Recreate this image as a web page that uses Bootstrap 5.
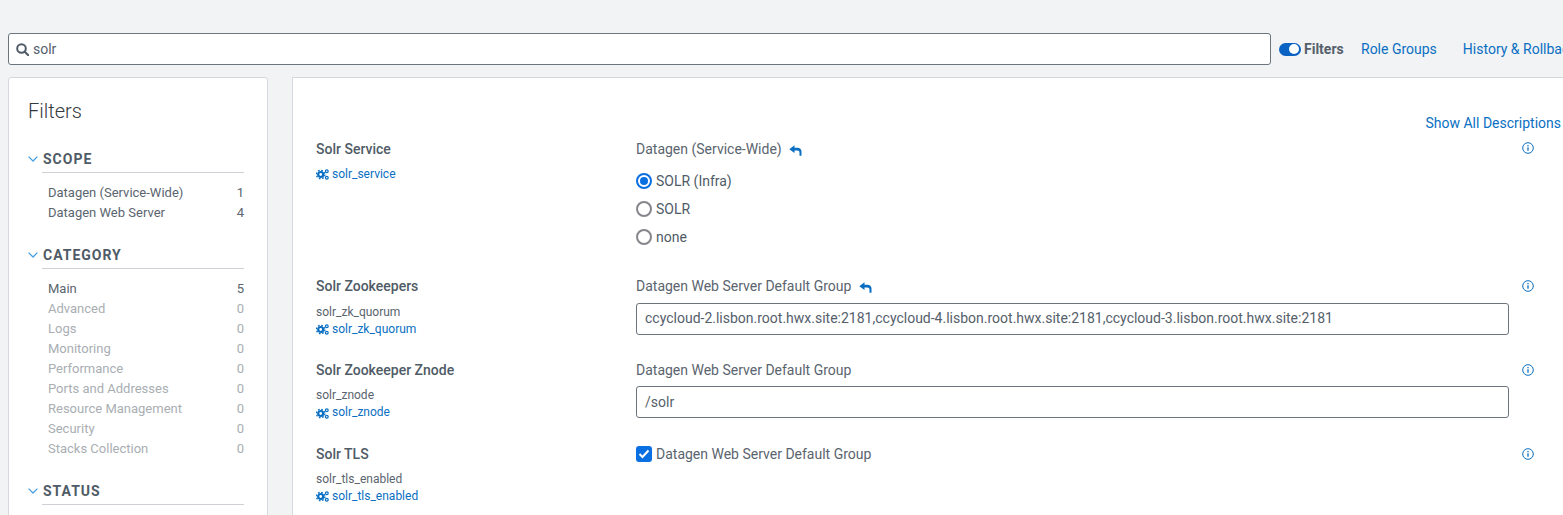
<!DOCTYPE html>
<html lang="en">
<head>
    <meta charset="UTF-8">
    <title>Solr Configuration</title>
    <link href="https://cdn.jsdelivr.net/npm/bootstrap@5.3.0/dist/css/bootstrap.min.css" rel="stylesheet">
    <style>
        html, body {
            height: 515px;
            overflow: hidden;
        }
        body {
            background-color: #f1f3f5;
            font-family: Roboto, "Liberation Sans", sans-serif;
            font-size: 13px;
            color: #5a656f;
        }
        a {
            text-decoration: none;
            color: #0a6fc2;
        }
        .top-bar {
            padding: 33px 0 12px 8px;
            height: 77px;
            width: 1600px;
        }
        .search-box {
            width: 1263px;
            height: 32px;
            background: #fff;
            border: 1px solid #6c757d;
            border-radius: 3px;
            padding-left: 7px;
            font-size: 14px;
            color: #55606b;
            gap: 4px;
        }
        .filter-toggle {
            margin-left: 8px;
            font-weight: 700;
            font-size: 14px;
            color: #55606b;
            width: 82px;
        }
        .toggle-pill {
            width: 22px;
            height: 13px;
            border-radius: 7px;
            background: #0a62c2;
            margin-right: 3px;
            padding: 1.5px 2px;
        }
        .toggle-pill span {
            width: 10px;
            height: 10px;
            border-radius: 50%;
            background: #fff;
        }
        .top-link {
            font-size: 14px;
            white-space: nowrap;
        }
        .top-link-next {
            margin-left: 26px;
        }
        .main-area {
            padding-left: 8px;
            height: 438px;
        }
        .filter-panel {
            width: 260px;
            flex: none;
            height: 460px;
            background: #fff;
            border: 1px solid #d5d8dc;
            border-radius: 3px;
            padding: 19px 23px 0 19px;
        }
        .filter-panel h2 {
            font-size: 20px;
            font-weight: 300;
            color: #343a40;
            line-height: 28px;
            margin-bottom: 25px;
        }
        .group-head {
            font-size: 14px;
            font-weight: 700;
            letter-spacing: 1px;
            color: #4f5b66;
            line-height: 18px;
        }
        .group-head svg {
            margin-right: 5px;
        }
        .group-rule {
            border-bottom: 1px solid #cdd0d4;
            margin-left: 14px;
            padding-bottom: 4px;
        }
        .group-items {
            padding: 10px 0 0 20px;
            margin-bottom: 23px;
        }
        .filter-item {
            height: 20px;
            line-height: 20px;
        }
        .filter-item.off {
            color: #a9aeb3;
        }
        .config-panel {
            margin-left: 24px;
            width: 1300px;
            flex: none;
            height: 460px;
            background: #fff;
            border: 1px solid #d5d8dc;
            padding: 0 0 0 23px;
        }
        .desc-row {
            width: 1245px;
            padding-top: 37px;
            height: 62px;
            font-size: 14px;
            line-height: 17px;
            text-align: right;
        }
        .cfg-row {
            width: 1218px;
            min-height: 83.8px;
        }
        .cfg-row-tall {
            min-height: 137px;
        }
        .cfg-left {
            width: 320px;
            flex: none;
        }
        .cfg-mid {
            width: 873px;
            flex: none;
        }
        .cfg-info svg {
            display: block;
            margin-top: 3px;
        }
        .cfg-row-tall .cfg-info svg {
            margin-top: 2px;
        }
        .cfg-title {
            font-size: 14px;
            font-weight: 500;
            line-height: 18px;
            color: #4f5b66;
        }
        .cfg-scope {
            font-size: 14px;
            line-height: 18px;
            color: #5a646e;
        }
        .cfg-key {
            font-size: 12px;
            line-height: 17px;
            margin-top: 8.5px;
            color: #5a646e;
        }
        .cfg-link {
            font-size: 12px;
            line-height: 17px;
        }
        .value-box {
            height: 32px;
            border: 1px solid #6c757d;
            border-radius: 3px;
            padding-left: 8px;
            margin-top: 7.6px;
            font-size: 14px;
            color: #55606b;
        }
        .radio-list {
            margin-top: 9px;
        }
        .radio-line {
            height: 28px;
            font-size: 14px;
            color: #4f5b66;
        }
        .radio-dot {
            width: 16px;
            height: 16px;
            border-radius: 50%;
            border: 2px solid #85868c;
            margin-right: 4px;
            flex: none;
        }
        .radio-dot.on {
            border-color: #0a6fe0;
            padding: 2px;
        }
        .radio-dot.on span {
            display: block;
            width: 8px;
            height: 8px;
            border-radius: 50%;
            background: #0a6fe0;
        }
        .check-on {
            width: 16px;
            height: 16px;
            border-radius: 3px;
            background: #0a6fe0;
            margin-right: 4px;
        }
    </style>
</head>
<body>
    <svg class="d-none">
        <symbol id="gears" viewBox="0 0 13 11">
            <circle cx="4.700" cy="5.500" r="2.500" fill="none" stroke="#0a6fc2" stroke-width="2.200"/>
            <circle cx="4.700" cy="5.500" r="4.200" fill="none" stroke="#0a6fc2" stroke-width="1.300" stroke-dasharray="1.700 1.600"/>
            <circle cx="10.800" cy="2.300" r="1.400" fill="none" stroke="#0a6fc2" stroke-width="1.200"/>
            <circle cx="10.800" cy="8.700" r="1.400" fill="none" stroke="#0a6fc2" stroke-width="1.200"/>
        </symbol>
        <symbol id="undo" viewBox="0 0 13 11">
            <path fill="#0a6fc2" d="M5.500.3.300 4.200l5.200 3.900V5.600h2.700c1.500 0 2.300.8 2.300 2.100v3h2V6.500c0-2.500-1.700-3.800-4.200-3.800H5.500z"/>
        </symbol>
        <symbol id="info" viewBox="0 0 12 12">
            <circle cx="6" cy="6" r="5.300" fill="none" stroke="#0a6fc2"/>
            <path d="M6 5.200v3.500M6 3v1.300" fill="none" stroke="#0a6fc2" stroke-width="1.300"/>
        </symbol>
        <symbol id="chevron" viewBox="0 0 10 6">
            <path d="M.6.6 5 5 9.400.6" fill="none" stroke="#4a9fe0" stroke-width="1.300"/>
        </symbol>
    </svg>

    <div class="top-bar d-flex align-items-center">
        <div class="search-box d-flex align-items-center">
            <svg width="13" height="13" viewBox="0 0 13 13" fill="none" stroke="#4f5b66" stroke-width="2"><circle cx="5.500" cy="5.500" r="4.300"/><path d="M8.700 8.700 12.300 12.300" stroke-linecap="round"/></svg>
            <span>solr</span>
        </div>
        <div class="filter-toggle d-flex align-items-center">
            <div class="toggle-pill d-flex justify-content-end"><span class="d-block"></span></div>
            Filters
        </div>
        <a class="top-link" href="#">Role Groups</a>
        <a class="top-link top-link-next" href="#">History &amp; Rollback</a>
    </div>

    <div class="main-area d-flex">
        <div class="filter-panel">
            <h2>Filters</h2>

            <div class="group-head d-flex align-items-center">
                <svg width="10" height="6"><use href="#chevron"/></svg>
                SCOPE
            </div>
            <div class="group-rule"></div>
            <div class="group-items">
                <div class="filter-item d-flex justify-content-between"><span>Datagen (Service-Wide)</span><span>1</span></div>
                <div class="filter-item d-flex justify-content-between"><span>Datagen Web Server</span><span>4</span></div>
            </div>

            <div class="group-head d-flex align-items-center">
                <svg width="10" height="6"><use href="#chevron"/></svg>
                CATEGORY
            </div>
            <div class="group-rule"></div>
            <div class="group-items">
                <div class="filter-item d-flex justify-content-between"><span>Main</span><span>5</span></div>
                <div class="filter-item off d-flex justify-content-between"><span>Advanced</span><span>0</span></div>
                <div class="filter-item off d-flex justify-content-between"><span>Logs</span><span>0</span></div>
                <div class="filter-item off d-flex justify-content-between"><span>Monitoring</span><span>0</span></div>
                <div class="filter-item off d-flex justify-content-between"><span>Performance</span><span>0</span></div>
                <div class="filter-item off d-flex justify-content-between"><span>Ports and Addresses</span><span>0</span></div>
                <div class="filter-item off d-flex justify-content-between"><span>Resource Management</span><span>0</span></div>
                <div class="filter-item off d-flex justify-content-between"><span>Security</span><span>0</span></div>
                <div class="filter-item off d-flex justify-content-between"><span>Stacks Collection</span><span>0</span></div>
            </div>

            <div class="group-head d-flex align-items-center">
                <svg width="10" height="6"><use href="#chevron"/></svg>
                STATUS
            </div>
            <div class="group-rule"></div>
        </div>

        <div class="config-panel">
            <div class="desc-row"><a href="#">Show All Descriptions</a></div>

            <div class="cfg-row cfg-row-tall d-flex">
                <div class="cfg-left">
                    <div class="cfg-title">Solr Service</div>
                    <div class="cfg-link mt-2"><a href="#"><svg width="13" height="11"><use href="#gears"/></svg> solr_service</a></div>
                </div>
                <div class="cfg-mid">
                    <div class="cfg-scope">Datagen (Service-Wide)
                        <svg class="ms-1" width="13" height="11"><use href="#undo"/></svg>
                    </div>
                    <div class="radio-list">
                        <div class="radio-line d-flex align-items-center"><div class="radio-dot on"><span></span></div>SOLR (Infra)</div>
                        <div class="radio-line d-flex align-items-center"><div class="radio-dot"></div>SOLR</div>
                        <div class="radio-line d-flex align-items-center"><div class="radio-dot"></div>none</div>
                    </div>
                </div>
                <div class="cfg-info ms-auto"><svg width="12" height="12"><use href="#info"/></svg></div>
            </div>

            <div class="cfg-row d-flex">
                <div class="cfg-left">
                    <div class="cfg-title">Solr Zookeepers</div>
                    <div class="cfg-key">solr_zk_quorum</div>
                    <div class="cfg-link"><a href="#"><svg width="13" height="11"><use href="#gears"/></svg> solr_zk_quorum</a></div>
                </div>
                <div class="cfg-mid">
                    <div class="cfg-scope">Datagen Web Server Default Group
                        <svg class="ms-1" width="13" height="11"><use href="#undo"/></svg>
                    </div>
                    <div class="value-box d-flex align-items-center">ccycloud-2.lisbon.root.hwx.site:2181,ccycloud-4.lisbon.root.hwx.site:2181,ccycloud-3.lisbon.root.hwx.site:2181</div>
                </div>
                <div class="cfg-info ms-auto"><svg width="12" height="12"><use href="#info"/></svg></div>
            </div>

            <div class="cfg-row d-flex">
                <div class="cfg-left">
                    <div class="cfg-title">Solr Zookeeper Znode</div>
                    <div class="cfg-key">solr_znode</div>
                    <div class="cfg-link"><a href="#"><svg width="13" height="11"><use href="#gears"/></svg> solr_znode</a></div>
                </div>
                <div class="cfg-mid">
                    <div class="cfg-scope">Datagen Web Server Default Group</div>
                    <div class="value-box d-flex align-items-center">/solr</div>
                </div>
                <div class="cfg-info ms-auto"><svg width="12" height="12"><use href="#info"/></svg></div>
            </div>

            <div class="cfg-row d-flex">
                <div class="cfg-left">
                    <div class="cfg-title">Solr TLS</div>
                    <div class="cfg-key">solr_tls_enabled</div>
                    <div class="cfg-link"><a href="#"><svg width="13" height="11"><use href="#gears"/></svg> solr_tls_enabled</a></div>
                </div>
                <div class="cfg-mid">
                    <div class="cfg-scope d-flex align-items-center">
                        <div class="check-on d-flex align-items-center justify-content-center"><svg width="12" height="10" viewBox="0 0 12 10" fill="none" stroke="#fff" stroke-width="2"><path d="M1.500 5 4.500 8 10.500 1.500"/></svg></div>
                        Datagen Web Server Default Group
                    </div>
                </div>
                <div class="cfg-info ms-auto"><svg width="12" height="12"><use href="#info"/></svg></div>
            </div>
        </div>
    </div>

    <script src="https://cdn.jsdelivr.net/npm/bootstrap@5.3.0/dist/js/bootstrap.bundle.min.js"></script>
</body>
</html>
